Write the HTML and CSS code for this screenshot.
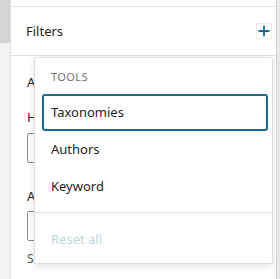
FILE: index.html
```html
<!DOCTYPE html>
<html>
<head lang="en">
    <meta charset="UTF-8">
    <title>Filters</title>
    <link rel="stylesheet" href="styles.css">
</head>
<body>
<div class="frame">
    <div class="rail"><div class="thumb"></div></div>

    <div class="panel">
        <div class="panel-top"></div>
        <div class="panel-head">
            <span class="title">Filters</span>
            <button class="add" aria-label="Add filter">
                <svg width="14" height="14" viewBox="0 0 14 14">
                    <path d="M7 1.5v11M1.5 7h11" stroke="#1d6a8e" stroke-width="1.8" fill="none"/>
                </svg>
            </button>
        </div>

        <div class="panel-body">
            <div class="label first">Author</div>
            <div class="label second">Hierarchy</div>
            <div class="field"></div>
            <div class="label third">Authors</div>
            <div class="field"></div>
            <div class="help">Search</div>
        </div>

        <!-- dropdown over the filters -->
        <div class="menu">
            <div class="menu-group">
                <div class="menu-label">TOOLS</div>
                <div class="menu-item active">Taxonomies</div>
                <div class="menu-item">Authors</div>
                <div class="menu-item">Keyword</div>
            </div>
            <div class="menu-group last">
                <div class="menu-item disabled">Reset all</div>
            </div>
        </div>
    </div>

    <div class="edge"></div>
</div>
</body>
</html>
```

FILE: styles.css
```css
*{
    margin: 0;
    padding: 0;
    box-sizing: border-box;
}
body{
    background: #f0f0f0;
    font-family: "Noto Sans", "Open Sans", sans-serif;
    color: #1e1e1e;
}
.frame{
    display: flex;
    width: 280px;
    height: 279px;
    overflow: hidden;
}
.rail{
    width: 11px;
    background: #f2f2f2;
    border-right: 1px solid #e2e2e2;
}
.thumb{
    width: 10px;
    height: 43px;
    background: #d4d4d4;
}
.panel{
    flex: 1;
    position: relative;
    background: #fff;
    border-right: 1px solid #d6d6d6;
}
.panel-top{
    height: 7px;
    border-bottom: 1px solid #e4e4e4;
}
.panel-head{
    height: 49px;
    display: flex;
    align-items: center;
    justify-content: space-between;
    padding: 0 4px 0 15px;
    border-bottom: 1px solid #e0e0e0;
}
.title{
    font-size: 13px;
}
.add{
    width: 16px;
    height: 16px;
    display: flex;
    align-items: center;
    justify-content: center;
    border: 1px dotted #e6d9c8;
    background: none;
}
.panel-body{
    padding: 0 16px;
    font-size: 13px;
    color: #1e1e1e;
}
.label{
    height: 20px;
    line-height: 20px;
}
.label.first{
    margin-top: 16px;
}
.label.second{
    margin-top: 15px;
}
.label.third{
    margin-top: 23px;
}
.field{
    height: 30px;
    border: 1px solid #8c8c8c;
    border-radius: 2px;
    margin-top: 6px;
}
.label.third + .field{
    margin-top: 5px;
}
.help{
    font-size: 12px;
    line-height: 17px;
    margin-top: 9px;
    color: #555;
}
.menu{
    position: absolute;
    top: 57px;
    left: 23px;
    width: 239px;
    background: #fff;
    border: 1px solid #dcdcdc;
    border-radius: 2px;
    box-shadow: 0 2px 6px rgba(0,0,0,0.12);
}
.menu-group{
    padding: 8px 4px 7px 7px;
}
.menu-group.last{
    padding-bottom: 6px;
}
.menu-group + .menu-group{
    border-top: 1px solid #e0e0e0;
}
.menu-label{
    height: 22px;
    line-height: 22px;
    padding-left: 9px;
    margin-bottom: 6px;
    font-size: 11px;
    letter-spacing: 0.4px;
    color: #757575;
}
.menu-item{
    height: 37px;
    line-height: 37px;
    padding-left: 9px;
    font-size: 13px;
    border-radius: 3px;
}
.menu-item.active{
    border: 2px solid #1d6a8e;
    line-height: 33px;
    padding-left: 7px;
}
.menu-item.disabled{
    height: 36px;
    line-height: 36px;
    color: #c2d6dc;
}
.edge{
    width: 3px;
    background: #e8e8e8;
}
```
